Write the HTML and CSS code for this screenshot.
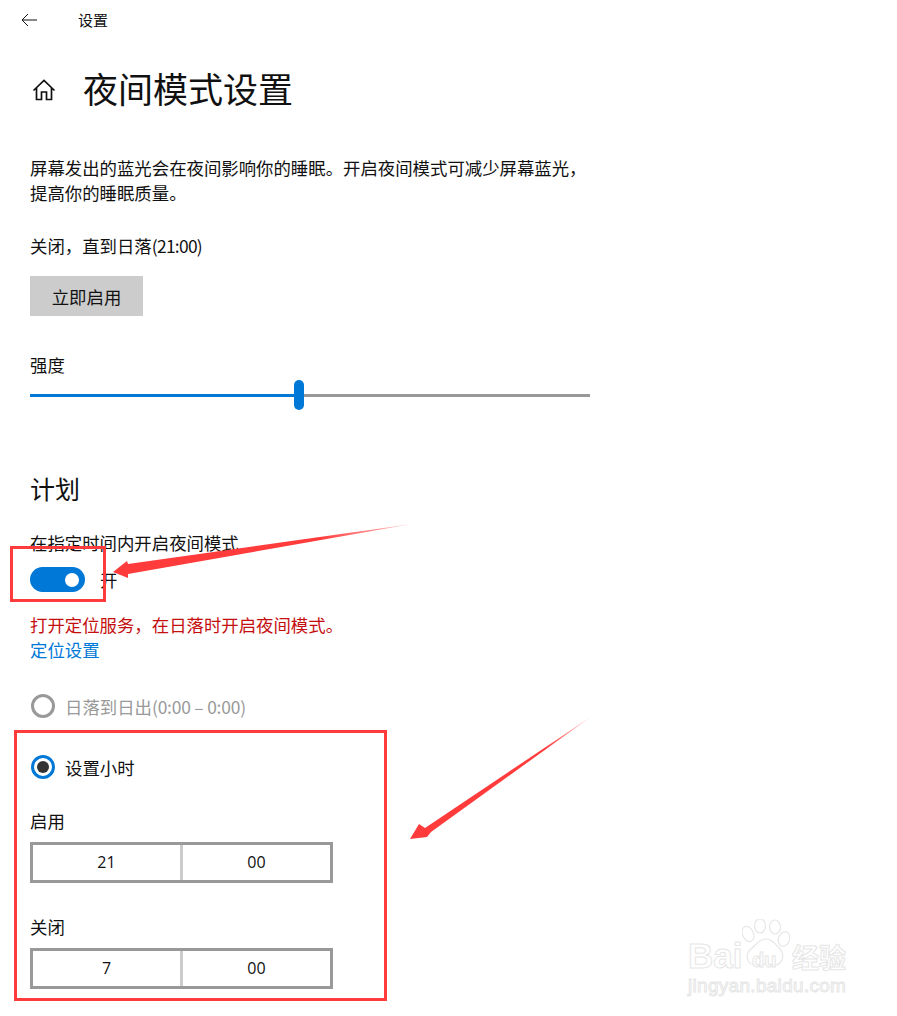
FILE: index.html
```html
<!DOCTYPE html>
<html lang="zh-CN">
<head>
<meta charset="utf-8">
<title>设置</title>
<link rel="stylesheet" href="styles.css">
</head>
<body>
<div class="page">
  <header class="topbar">
    <svg class="back" width="16" height="14" viewBox="0 0 16 14"><path d="M7 1 1 7l6 6M1 7h15" fill="none" stroke="#111" stroke-width="1"/></svg>
    <span class="app-name">设置</span>
  </header>
  <div class="title-row">
    <svg class="home" width="24" height="24" viewBox="0 0 24 24"><path d="M1.500 12.500 12 2.500l10.500 10M4.500 10v11.500h5V14h5v7.500h5V10" fill="none" stroke="#111" stroke-width="1.700"/></svg>
    <h1>夜间模式设置</h1>
  </div>
  <main class="content">
    <p class="desc">屏幕发出的蓝光会在夜间影响你的睡眠。开启夜间模式可减少屏幕蓝光，<br>提高你的睡眠质量。</p>
    <p class="status">关闭，直到日落<span class="num">(21:00)</span></p>
    <button class="primary">立即启用</button>
    <p class="slider-label">强度</p>
    <div class="slider"><div class="fill"></div><div class="thumb"></div><div class="rest"></div></div>
    <h2>计划</h2>
    <p class="toggle-label">在指定时间内开启夜间模式</p>
    <div class="toggle-row"><span class="toggle"><span class="knob"></span></span><span>开</span></div>
    <p class="warn">打开定位服务，在日落时开启夜间模式。</p>
    <a class="link" href="#">定位设置</a>
    <div class="radio-row disabled"><span class="radio"></span><span>日落到日出<span class="range">(0:00 – 0:00)</span></span></div>
    <div class="radio-row selected"><span class="radio"><span class="dot"></span></span><span>设置小时</span></div>
    <p class="time-label first">启用</p>
    <div class="time"><span class="cell">21</span><span class="cell">00</span></div>
    <p class="time-label second">关闭</p>
    <div class="time"><span class="cell">7</span><span class="cell">00</span></div>
  </main>

  <svg class="notes" width="897" height="1016" viewBox="0 0 897 1016">
    <defs>
      <linearGradient id="fade1" gradientUnits="userSpaceOnUse" x1="412" y1="524" x2="320" y2="540"><stop offset="0" stop-color="#ff3b3b" stop-opacity=".25"/><stop offset="1" stop-color="#ff3b3b"/></linearGradient>
      <linearGradient id="fade2" gradientUnits="userSpaceOnUse" x1="592" y1="716" x2="545" y2="748"><stop offset="0" stop-color="#ff3b3b" stop-opacity=".25"/><stop offset="1" stop-color="#ff3b3b"/></linearGradient>
    </defs>
    <rect x="11.500" y="547.500" width="93" height="53" fill="none" stroke="#ff3b3b" stroke-width="3"/>
    <rect x="15.500" y="731.500" width="370" height="268" fill="none" stroke="#ff3b3b" stroke-width="3"/>
    <path d="M412 524 128 564l-1-3-14 11 15 6v-4Z" fill="url(#fade1)"/>
    <path d="M592 716 425 828l-6-4-9 15 17-2 4-5Z" fill="url(#fade2)"/>
  </svg>

  <div class="mark">
    <svg class="paw" width="48" height="52" viewBox="0 0 48 52">
      <g fill="#fff" stroke="#e6e6e6" stroke-width="1.200">
        <ellipse cx="6" cy="15" rx="5.500" ry="8" transform="rotate(-25 6 15)"/>
        <ellipse cx="18" cy="7" rx="5.500" ry="7"/>
        <ellipse cx="33" cy="8" rx="5.500" ry="7"/>
        <ellipse cx="42" cy="20" rx="5.500" ry="7.500" transform="rotate(20 42 20)"/>
        <path d="M24 20c6 0 9 5 14 10 5 6 3 16-6 16-4 0-6-1-9-1s-5 2-10 1C4 45 3 35 9 30c5-4 8-10 15-10Z"/>
      </g>
    </svg>
    <span class="mark-bai">Bai</span>
    <span class="mark-du">du</span>
    <span class="mark-jy">经验</span>
    <span class="mark-url">jingyan.baidu.com</span>
  </div>
</div>
</body>
</html>
```
FILE: styles.css
```css
* { box-sizing: border-box; }
html, body { margin: 0; padding: 0; background: #fff; }
body {
  font-family: "Noto Sans CJK SC", "Noto Sans", sans-serif;
  color: #111;
  font-size: 17.400px;
  line-height: 25px;
}
p, h1, h2 { margin: 0; font-weight: 400; }
.page { position: relative; width: 897px; height: 1016px; overflow: hidden; }
.num { letter-spacing: -.7px; }
.range { letter-spacing: -.2px; }

.topbar { display: flex; align-items: center; height: 40px; padding-left: 21px; }
.back { display: block; }
.app-name { margin-left: 41px; font-size: 15px; line-height: 38px; height: 38px; }

.title-row { display: flex; align-items: center; height: 60px; margin-top: 18px; padding-left: 32px; }
.home { display: block; margin-top: 4px; }
h1 { margin-left: 27px; font-size: 35px; line-height: 60px; }

.content { padding-left: 30px; width: 590px; }
.desc { margin-top: 37px; }
.status { margin-top: 28px; }
.primary {
  display: block; width: 113px; height: 40px; margin-top: 18px; padding: 0; border: 0;
  background: #ccc; color: #111; font: inherit;
}
.slider-label { margin-top: 36px; }
.slider { display: flex; align-items: center; height: 30px; margin-top: 3px; }
.fill { width: 264px; height: 3px; background: #0078d7; }
.thumb { width: 10px; height: 30px; border-radius: 5px; background: #0078d7; }
.rest { flex: 1; height: 3px; background: #999; }
h2 { margin-top: 60px; font-size: 25px; line-height: 36px; }
.toggle-label { margin-top: 24px; }
.toggle-row { display: flex; align-items: center; gap: 15px; height: 25px; margin-top: 12px; }
.toggle { display: flex; align-items: center; justify-content: flex-end; width: 55px; height: 25px; padding-right: 6px; border-radius: 13px; background: #0078d7; }
.knob { width: 14px; height: 14px; border-radius: 50%; background: #fff; }
.warn { margin-top: 20px; color: #c50f0f; }
.link { display: block; color: #0078d7; text-decoration: none; }
.radio-row { display: flex; align-items: center; gap: 10px; height: 26px; margin-left: 1px; }
.disabled { margin-top: 31px; color: #999; }
.selected { margin-top: 35px; }
.radio { display: flex; align-items: center; justify-content: center; width: 24px; height: 24px; border-radius: 50%; border: 3px solid #999; }
.selected .radio { border-color: #0078d7; }
.dot { width: 12px; height: 12px; border-radius: 50%; background: #333; }
.time-label { line-height: 25px; }
.first { margin-top: 28px; }
.second { margin-top: 31px; }
.time { display: flex; width: 303px; height: 41px; margin-top: 9px; border: 3px solid #999; }
.cell { flex: 1; display: flex; align-items: center; justify-content: center; font-family: "Open Sans", "Noto Sans", sans-serif; font-size: 16px; }
.cell + .cell { border-left: 3px solid #ccc; }

.notes { position: absolute; left: 0; top: 0; pointer-events: none; }

.mark { position: absolute; left: 688px; top: 918px; width: 170px; height: 80px; color: #fff; font-family: "Liberation Sans", sans-serif; }
.mark span { position: absolute; -webkit-text-stroke: 1px #e6e6e6; line-height: 1; }
.paw { position: absolute; left: 54px; top: 1px; }
.mark-bai { left: 0; top: 20px; font-size: 35px; font-weight: 700; }
.mark-du { left: 64px; top: 32px; font-size: 20px; font-weight: 700; }
.mark-jy { left: 104px; top: 25px; font-size: 27px; font-weight: 700; font-family: "Noto Sans CJK SC", sans-serif; }
.mark-url { left: 0; top: 58px; font-size: 19px; letter-spacing: .3px; }
```
